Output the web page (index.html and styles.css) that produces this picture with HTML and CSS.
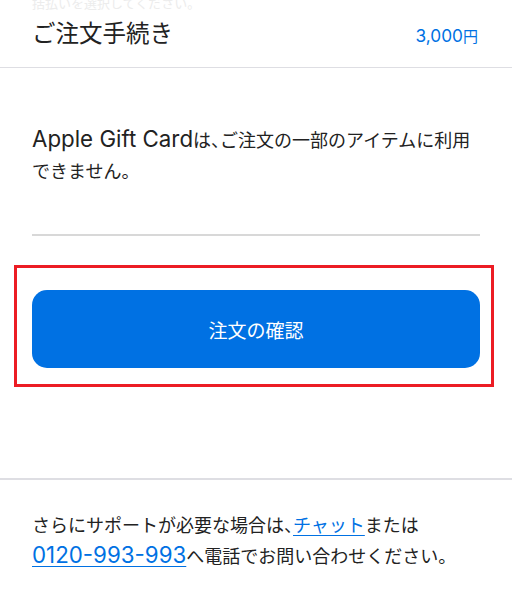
FILE: index.html
```html
<!DOCTYPE html>
<html lang="ja">
<head>
  <meta charset="UTF-8">
  <meta name="viewport" content="width=device-width, initial-scale=1.0">
  <title>ご注文手続き</title>
  <link rel="stylesheet" href="styles.css">
</head>
<body>
  <div class="page">
    <!-- faded line from the step above -->
    <div class="prev-hint">括払いを選択してください。</div>

    <div class="header">
      <h1 class="header-title">ご注文手続き</h1>
      <span class="header-price"><span class="en">3,000</span>円</span>
    </div>

    <div class="content">
      <p class="message"><span class="en">Apple Gift Card</span>は<span class="punct">、</span>ご注文の一部のアイテムに利用できません。</p>
      <div class="rule"></div>
    </div>

    <div class="highlight">
      <button class="confirm-button">注文の確認</button>
    </div>

    <div class="support">
      <p class="support-text">さらにサポートが必要な場合は<span class="punct">、</span><a href="#" class="link">チャット</a>または<br><a href="#" class="link en">0120-993-993</a>へ電話でお問い合わせください。</p>
    </div>
  </div>
</body>
</html>
```

FILE: styles.css
```css
:root {
  --blue: #0071e3;
  --text-color: #1d1d1f;
  --line: #dedee3;
  --red: #ec1c24;
}

body {
  margin: 0;
  padding: 0;
  background-color: #fff;
  color: var(--text-color);
  font-family: Inter, "Noto Sans CJK JP", sans-serif;
  overflow: hidden;
}

.page {
  width: 512px;
}

/* latin runs are drawn a little larger than the kana, as on the device */
.en {
  font-size: 1.24em;
  line-height: 1;
}

.punct {
  font-feature-settings: "halt";
}

.prev-hint {
  margin-top: -5px;
  padding: 0 32px;
  font-size: 13px;
  line-height: 17px;
  color: #ececec;
}

.header {
  display: flex;
  justify-content: space-between;
  align-items: baseline;
  padding: 0 32px 12px;
  height: 43px;
  border-bottom: 1px solid var(--line);
}

.header-title {
  margin: 0;
  font-size: 23.5px;
  font-weight: 400;
  line-height: 43px;
  color: #222;
}

.header-price {
  font-size: 15px;
  color: var(--blue);
  padding-right: 2px;
}

.header-price .en {
  font-size: 1.15em;
}

.content {
  padding: 0 32px;
}

.message {
  margin: 57px 0 0;
  font-size: 18px;
  line-height: 31px;
  color: #222;
}

.rule {
  margin-top: 47px;
  height: 2px;
  background-color: #d8d8d8;
}

.highlight {
  margin: 29px 18px 0 14px;
  padding: 22px 11px 16px 15px;
  border: 3px solid var(--red);
}

.confirm-button {
  display: block;
  width: 100%;
  height: 78px;
  border: none;
  border-radius: 15px;
  background-color: var(--blue);
  color: #fff;
  font-family: inherit;
  font-size: 19px;
  cursor: pointer;
}

.support {
  margin-top: 91px;
  border-top: 2px solid var(--line);
  padding: 0 32px;
}

.support-text {
  margin: 30px 0 0;
  font-size: 18px;
  line-height: 31px;
  color: #222;
}

.link {
  color: var(--blue);
  text-decoration: underline;
  text-decoration-thickness: 1px;
  text-underline-offset: 3px;
}
```
